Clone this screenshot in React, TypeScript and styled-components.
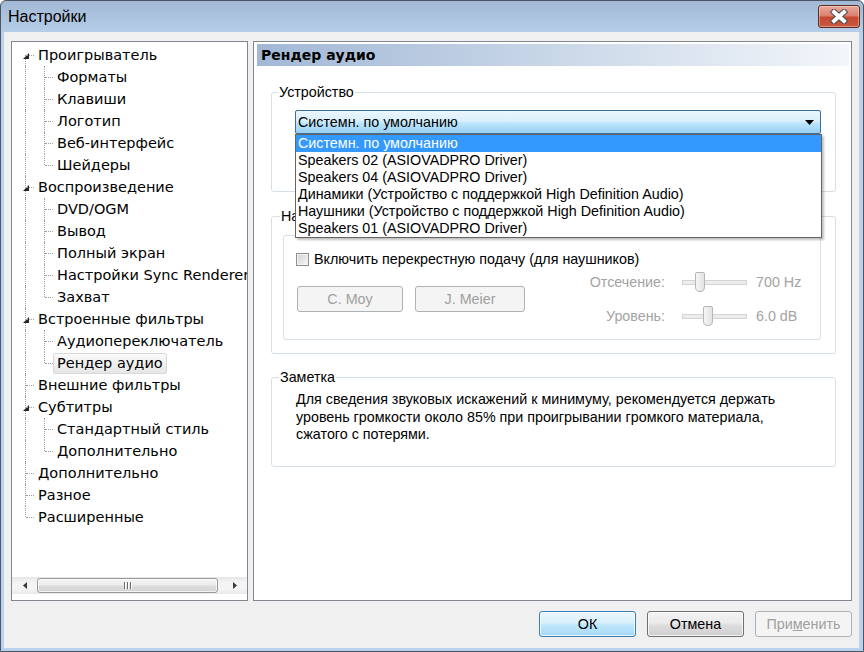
import React from "react";
import styled, { createGlobalStyle } from "styled-components";

const GlobalStyle = createGlobalStyle`
  html, body {
    margin: 0;
    padding: 0;
    background: #ffffff;
  }
  body {
    font-family: "Liberation Sans", Arial, sans-serif;
    color: #000;
  }
  * {
    box-sizing: border-box;
  }
`;

const uiFont = `"Liberation Sans", Arial, sans-serif`;
const treeFont = `"DejaVu Sans", Verdana, sans-serif`;
const textSize = "14.3px";

type Vertical = "full" | "top" | "bottom" | "none";

type TreeItem = {
  label: string;
  level: 0 | 1;
  expanded?: boolean;
  selected?: boolean;
};

const treeItems: TreeItem[] = [
  { label: "Проигрыватель", level: 0, expanded: true },
  { label: "Форматы", level: 1 },
  { label: "Клавиши", level: 1 },
  { label: "Логотип", level: 1 },
  { label: "Веб-интерфейс", level: 1 },
  { label: "Шейдеры", level: 1 },
  { label: "Воспроизведение", level: 0, expanded: true },
  { label: "DVD/OGM", level: 1 },
  { label: "Вывод", level: 1 },
  { label: "Полный экран", level: 1 },
  { label: "Настройки Sync Renderer", level: 1 },
  { label: "Захват", level: 1 },
  { label: "Встроенные фильтры", level: 0, expanded: true },
  { label: "Аудиопереключатель", level: 1 },
  { label: "Рендер аудио", level: 1, selected: true },
  { label: "Внешние фильтры", level: 0 },
  { label: "Субтитры", level: 0, expanded: true },
  { label: "Стандартный стиль", level: 1 },
  { label: "Дополнительно", level: 1 },
  { label: "Дополнительно", level: 0 },
  { label: "Разное", level: 0 },
  { label: "Расширенные", level: 0 },
];

const devices = [
  "Системн. по умолчанию",
  "Speakers 02 (ASIOVADPRO Driver)",
  "Speakers 04 (ASIOVADPRO Driver)",
  "Динамики (Устройство с поддержкой High Definition Audio)",
  "Наушники (Устройство с поддержкой High Definition Audio)",
  "Speakers 01 (ASIOVADPRO Driver)",
];

const Window = styled.div`
  width: 864px;
  height: 652px;
  display: flex;
  flex-direction: column;
  border: 1px solid #4b5563;
  border-radius: 6px 6px 0 0;
  background: linear-gradient(#a1b9d5 0px, #b6cde7 31px, #b9d1ea 32px, #b9d1ea 100%);
  overflow: hidden;
`;

const TitleBar = styled.div`
  height: 31px;
  flex: none;
  display: flex;
  align-items: flex-start;
  justify-content: space-between;
  padding: 4px 3px 0 7px;
`;

const Title = styled.div`
  font-size: 16px;
  line-height: 23px;
  color: #000;
`;

const CloseButton = styled.div`
  width: 42px;
  height: 23px;
  border: 1px solid #5e2a22;
  border-radius: 3px;
  background: linear-gradient(#e9a99b 0%, #dc8270 45%, #c7472f 55%, #c65a3f 100%);
  box-shadow: inset 0 0 0 1px rgba(255, 255, 255, 0.35);
  display: flex;
  align-items: center;
  justify-content: center;
`;

const Client = styled.div`
  flex: 1;
  margin: 0 4px 3px 3px;
  background: #f0f0f0;
  padding: 9px 7px 11px 7px;
  display: flex;
  flex-direction: column;
`;

const MainRow = styled.div`
  height: 560px;
  display: flex;
  gap: 5px;
`;

const TreePanel = styled.div`
  width: 237px;
  flex: none;
  border: 1px solid #828790;
  background: #fff;
  display: flex;
  flex-direction: column;
`;

const TreeList = styled.div`
  flex: 1;
  overflow: hidden;
  padding: 2px 0 0 3px;
`;

const TreeRow = styled.div`
  height: 22px;
  display: flex;
  align-items: center;
  white-space: nowrap;
`;

const Branch = styled.span<{ $v: Vertical; $stub: boolean }>`
  position: relative;
  flex: none;
  width: 19px;
  height: 22px;
  &::before {
    content: "";
    display: ${({ $v }) => ($v === "none" ? "none" : "block")};
    position: absolute;
    left: 10px;
    top: ${({ $v }) => ($v === "bottom" ? "11px" : "0")};
    bottom: ${({ $v }) => ($v === "top" ? "11px" : "0")};
    border-left: 1px dotted #a0a0a0;
  }
  &::after {
    content: "";
    display: ${({ $stub }) => ($stub ? "block" : "none")};
    position: absolute;
    left: 11px;
    right: 0;
    top: 11px;
    border-top: 1px dotted #a0a0a0;
  }
  svg {
    position: absolute;
    left: 8px;
    top: 9px;
  }
`;

const TreeLabel = styled.span<{ $selected?: boolean }>`
  flex: none;
  height: 21px;
  line-height: 19px;
  padding: 0 3px;
  font-family: ${treeFont};
  font-size: 14.5px;
  border: 1px solid ${({ $selected }) => ($selected ? "#d9d9d9" : "transparent")};
  border-radius: 2px;
  background: ${({ $selected }) =>
    $selected ? "linear-gradient(#fafafa, #e6e6e6)" : "transparent"};
`;

const HScroll = styled.div`
  height: 17px;
  flex: none;
  display: flex;
  background: linear-gradient(#e6e6e6, #f4f4f4 30%, #f4f4f4 70%, #e9e9e9);
  margin-bottom: 6px;
`;

const ScrollArrow = styled.div`
  width: 25px;
  flex: none;
  display: flex;
  align-items: center;
  justify-content: center;
`;

const ScrollTrack = styled.div`
  flex: 1;
  display: flex;
  padding: 1px 0;
`;

const ScrollThumb = styled.div<{ $width: number }>`
  width: ${({ $width }) => $width}px;
  border: 1px solid #9a9a9a;
  border-radius: 3px;
  background: linear-gradient(#f5f5f5 0%, #ececec 45%, #dcdcdc 55%, #d4d4d4 100%);
  box-shadow: inset 0 0 0 1px rgba(255, 255, 255, 0.7);
  display: flex;
  align-items: center;
  justify-content: center;
  gap: 2px;
`;

const Grip = styled.span`
  width: 1px;
  height: 7px;
  background: #6d6d6d;
  box-shadow: 1px 0 0 #ffffff;
`;

const Panel = styled.section`
  flex: 1;
  border: 1px solid #828790;
  background: #fff;
  padding: 2px 2px 0 3px;
  display: flex;
  flex-direction: column;
`;

const PanelHeader = styled.h2`
  margin: 0;
  height: 22px;
  padding-left: 4px;
  font-family: ${treeFont};
  font-size: 14px;
  font-weight: bold;
  line-height: 22px;
  background: linear-gradient(to right, #a2b8d6, #c9d7e8 50%, #f3f6fa);
`;

const PanelBody = styled.div`
  padding: 18px 13px 0 14px;
  display: flex;
  flex-direction: column;
`;

const Group = styled.fieldset<{ $gap?: number }>`
  margin: ${({ $gap }) => $gap ?? 0}px 0 0 0;
  padding: 0;
  border: 1px solid #d5dfe5;
  border-radius: 3px;
  min-width: 0;
`;

const Legend = styled.legend<{ $indent?: number }>`
  margin-left: ${({ $indent }) => $indent ?? 6}px;
  padding: 0 1px;
  font-size: ${textSize};
  line-height: 16px;
`;

const GroupBody = styled.div<{ $pad: string }>`
  padding: ${({ $pad }) => $pad};
`;

const Combo = styled.div`
  position: relative;
  height: 24px;
  border: 1px solid #3c6f99;
  border-radius: 2px;
  background: linear-gradient(#eaf6fd 0%, #d9f0fc 45%, #bee6fd 55%, #97cfef 100%);
  display: flex;
  align-items: center;
  justify-content: space-between;
  padding: 0 6px 0 2px;
  font-size: ${textSize};
`;

const DropList = styled.ul`
  position: absolute;
  z-index: 10;
  left: -1px;
  right: -2px;
  top: 23px;
  margin: 0;
  padding: 0;
  list-style: none;
  background: #fff;
  border: 1px solid #646464;
  box-shadow: 2px 2px 2px rgba(0, 0, 0, 0.25);
`;

const DropItem = styled.li<{ $active?: boolean }>`
  height: 17px;
  line-height: 17px;
  padding-left: 2px;
  font-size: ${textSize};
  white-space: nowrap;
  background: ${({ $active }) => ($active ? "#3399ff" : "transparent")};
  color: ${({ $active }) => ($active ? "#fff" : "#000")};
`;

const InnerBox = styled.div`
  border: 1px solid #d5dfe5;
  border-radius: 3px;
  padding: 15px 6px 13px 12px;
  display: flex;
  flex-direction: column;
`;

const CheckRow = styled.label`
  display: flex;
  align-items: center;
  gap: 5px;
  font-size: ${textSize};
  height: 16px;
`;

const CheckBox = styled.span`
  width: 13px;
  height: 13px;
  border: 1px solid #8e8f8f;
  background: linear-gradient(135deg, #d3d3d3, #f6f6f6);
  box-shadow: inset 0 0 0 1px #f4f4f4;
`;

const LowerRow = styled.div`
  display: flex;
  justify-content: space-between;
  margin-top: 3px;
`;

const ButtonRow = styled.div`
  display: flex;
  gap: 12px;
  padding-top: 16px;
  padding-left: 1px;
`;

const SmallButton = styled.button<{ $width: number }>`
  width: ${({ $width }) => $width}px;
  height: 26px;
  border: 1px solid #adb2b5;
  border-radius: 3px;
  background: #f4f4f4;
  color: #a0a0a0;
  font-family: ${uiFont};
  font-size: ${textSize};
  padding: 0;
`;

const SliderGrid = styled.div`
  display: grid;
  grid-template-columns: auto 65px 50px;
  column-gap: 17px;
  row-gap: 14px;
  align-items: center;
  padding-top: 2px;
`;

const SliderText = styled.span<{ $right?: boolean }>`
  font-size: ${textSize};
  color: #a3a3a3;
  text-align: ${({ $right }) => ($right ? "right" : "left")};
  margin-left: ${({ $right }) => ($right ? "0" : "-8px")};
  white-space: nowrap;
`;

const SliderTrack = styled.div`
  position: relative;
  height: 20px;
  &::before {
    content: "";
    position: absolute;
    left: 0;
    right: 0;
    top: 8px;
    height: 3px;
    border: 1px solid #d4d4d4;
    background: #ececec;
  }
  svg {
    position: absolute;
    top: 0;
  }
`;

const NoteText = styled.p`
  margin: 0;
  max-width: 505px;
  font-size: ${textSize};
  line-height: 17.5px;
`;

const Footer = styled.div`
  margin-top: 10px;
  display: flex;
  justify-content: flex-end;
  gap: 11px;
`;

const DialogButton = styled.button<{ $variant: "default" | "normal" | "disabled" }>`
  width: 97px;
  height: 26px;
  padding: 0;
  border-radius: 3px;
  font-family: ${uiFont};
  font-size: ${textSize};
  border: 1px solid
    ${({ $variant }) =>
      $variant === "default" ? "#3c7fb1" : $variant === "normal" ? "#707070" : "#adb2b5"};
  color: ${({ $variant }) => ($variant === "disabled" ? "#a0a0a0" : "#000")};
  background: ${({ $variant }) =>
    $variant === "default"
      ? "linear-gradient(#eaf6fd 0%, #d9f0fc 45%, #bee6fd 55%, #a7d9f5 100%)"
      : $variant === "normal"
      ? "linear-gradient(#f2f2f2 0%, #ebebeb 45%, #dddddd 55%, #cfcfcf 100%)"
      : "#f4f4f4"};
  box-shadow: ${({ $variant }) =>
    $variant === "disabled" ? "none" : "inset 0 0 0 1px rgba(255,255,255,0.75)"};
  u {
    text-decoration: underline;
  }
`;

const ExpandGlyph = () => (
  <svg width="6" height="6" viewBox="0 0 6 6">
    <polygon points="6,0 6,6 0,6" fill="#262626" />
  </svg>
);

const CloseGlyph = () => (
  <svg width="18" height="15" viewBox="0 0 18 15">
    <g strokeLinecap="square">
      <line x1="4" y1="3" x2="14" y2="12" stroke="#4a4a4a" strokeWidth="6" />
      <line x1="14" y1="3" x2="4" y2="12" stroke="#4a4a4a" strokeWidth="6" />
      <line x1="4" y1="3" x2="14" y2="12" stroke="#ffffff" strokeWidth="4" />
      <line x1="14" y1="3" x2="4" y2="12" stroke="#ffffff" strokeWidth="4" />
    </g>
  </svg>
);

const ThumbGlyph = ({ left }: { left: number }) => (
  <svg width="10" height="20" viewBox="0 0 10 20" style={{ left }}>
    <defs>
      <linearGradient id="thumbFill" x1="0" y1="0" x2="1" y2="0">
        <stop offset="0" stopColor="#f7f7f7" />
        <stop offset="1" stopColor="#e2e2e2" />
      </linearGradient>
    </defs>
    <path
      d="M0.5 2 Q0.5 0.5 2 0.5 H8 Q9.5 0.5 9.5 2 V15 Q9.5 19.5 5 19.5 Q0.5 19.5 0.5 15 Z"
      fill="url(#thumbFill)"
      stroke="#b4b4b4"
    />
  </svg>
);

const getVertical = (index: number): Vertical => {
  const item = treeItems[index];
  if (item.level === 0) {
    if (index === 0) return "bottom";
    const lastRoot = treeItems.map((t) => t.level).lastIndexOf(0);
    return index === lastRoot ? "top" : "full";
  }
  const next = treeItems[index + 1];
  return next && next.level === 1 ? "full" : "top";
};

const Tree = () => (
  <TreePanel>
    <TreeList>
      {treeItems.map((item, i) => (
        <TreeRow key={i}>
          {item.level === 1 ? (
            <>
              <Branch $v="full" $stub={false} />
              <Branch $v={getVertical(i)} $stub />
            </>
          ) : (
            <Branch $v={getVertical(i)} $stub>
              {item.expanded && <ExpandGlyph />}
            </Branch>
          )}
          <TreeLabel $selected={item.selected}>{item.label}</TreeLabel>
        </TreeRow>
      ))}
    </TreeList>
    <HScroll>
      <ScrollArrow>
        <svg width="4" height="7" viewBox="0 0 4 7">
          <polygon points="4,0 4,7 0,3.5" fill="#3a3a3a" />
        </svg>
      </ScrollArrow>
      <ScrollTrack>
        <ScrollThumb $width={181}>
          <Grip />
          <Grip />
          <Grip />
        </ScrollThumb>
      </ScrollTrack>
      <ScrollArrow>
        <svg width="4" height="7" viewBox="0 0 4 7">
          <polygon points="0,0 4,3.5 0,7" fill="#3a3a3a" />
        </svg>
      </ScrollArrow>
    </HScroll>
  </TreePanel>
);

const AudioRendererPage = () => (
  <Panel>
    <PanelHeader>Рендер аудио</PanelHeader>
    <PanelBody>
      <Group>
        <Legend>Устройство</Legend>
        <GroupBody $pad="10px 14px 57px 23px">
          <Combo>
            <span>Системн. по умолчанию</span>
            <svg width="9" height="5" viewBox="0 0 9 5">
              <polygon points="0,0 9,0 4.5,5" fill="#000" />
            </svg>
            <DropList>
              {devices.map((d, i) => (
                <DropItem key={i} $active={i === 0}>
                  {d}
                </DropItem>
              ))}
            </DropList>
          </Combo>
        </GroupBody>
      </Group>

      <Group $gap={16}>
        <Legend $indent={8}>Наушники</Legend>
        <GroupBody $pad="11px 14px 13px 11px">
          <InnerBox>
            <CheckRow>
              <CheckBox />
              <span>Включить перекрестную подачу (для наушников)</span>
            </CheckRow>
            <LowerRow>
              <ButtonRow>
                <SmallButton $width={106} disabled>
                  C. Moy
                </SmallButton>
                <SmallButton $width={110} disabled>
                  J. Meier
                </SmallButton>
              </ButtonRow>
              <SliderGrid>
                <SliderText $right>Отсечение:</SliderText>
                <SliderTrack>
                  <ThumbGlyph left={13} />
                </SliderTrack>
                <SliderText>700 Hz</SliderText>
                <SliderText $right>Уровень:</SliderText>
                <SliderTrack>
                  <ThumbGlyph left={21} />
                </SliderTrack>
                <SliderText>6.0 dB</SliderText>
              </SliderGrid>
            </LowerRow>
          </InnerBox>
        </GroupBody>
      </Group>

      <Group $gap={15}>
        <Legend $indent={7}>Заметка</Legend>
        <GroupBody $pad="6px 14px 22px 24px">
          <NoteText>
            Для сведения звуковых искажений к минимуму, рекомендуется держать уровень
            громкости около 85% при проигрывании громкого материала, сжатого с потерями.
          </NoteText>
        </GroupBody>
      </Group>
    </PanelBody>
  </Panel>
);

const App = () => (
  <>
    <GlobalStyle />
    <Window>
      <TitleBar>
        <Title>Настройки</Title>
        <CloseButton>
          <CloseGlyph />
        </CloseButton>
      </TitleBar>
      <Client>
        <MainRow>
          <Tree />
          <AudioRendererPage />
        </MainRow>
        <Footer>
          <DialogButton $variant="default">ОК</DialogButton>
          <DialogButton $variant="normal">Отмена</DialogButton>
          <DialogButton $variant="disabled" disabled>
            При<u>м</u>енить
          </DialogButton>
        </Footer>
      </Client>
    </Window>
  </>
);

export default App;
